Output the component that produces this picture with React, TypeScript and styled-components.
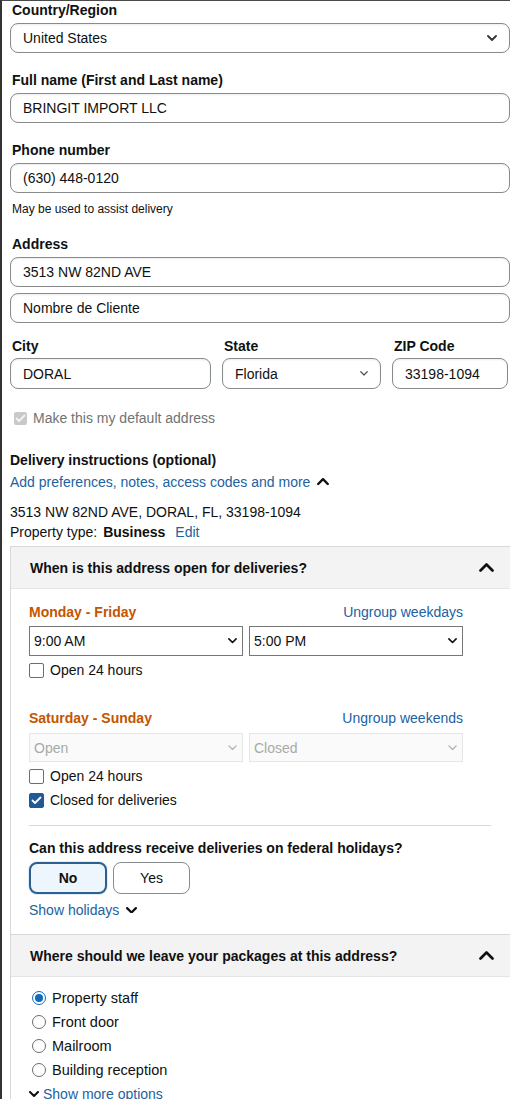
import React from 'react';
import styled, { createGlobalStyle } from 'styled-components';

const GlobalStyle = createGlobalStyle`
  html, body {
    margin: 0;
    padding: 0;
    background: #ffffff;
  }
  body {
    font-family: "Liberation Sans", Arial, sans-serif;
    font-size: 14px;
    color: #0f1111;
    border-top: 1px solid #4a4a4a;
    border-left: 2px solid #333333;
    overflow: hidden;
  }
  * { box-sizing: border-box; }
`;

const Page = styled.div`
  padding: 0 0 0 8px;
  width: 508px;
`;

const Label = styled.div<{ $mt?: number }>`
  font-weight: 700;
  font-size: 14px;
  line-height: 20px;
  height: 20px;
  margin-top: ${p => p.$mt ?? 0}px;
  padding-left: 2px;
  margin-bottom: 3px;
`;

const Field = styled.div<{ $mt?: number; $h?: number }>`
  height: ${p => p.$h ?? 30}px;
  border: 1px solid #888c8c;
  border-radius: 8px;
  padding: 0 12px;
  display: flex;
  align-items: center;
  justify-content: space-between;
  font-size: 14px;
  margin-top: ${p => p.$mt ?? 0}px;
  background: #ffffff;
  box-shadow: 0 1px 2px rgba(15, 17, 17, 0.08) inset;
`;

const Hint = styled.div`
  font-size: 12px;
  line-height: 16px;
  margin-top: 8px;
  padding-left: 2px;
`;

const Row3 = styled.div`
  display: grid;
  grid-template-columns: 201px 159px 116px;
  gap: 11px;
  margin-top: 13px;
`;

const Col = styled.div``;

const ColLabel = styled(Label)`
  margin-bottom: 2px;
`;

const DefaultRow = styled.label`
  display: flex;
  align-items: center;
  gap: 6px;
  height: 20px;
  margin-top: 19px;
  padding-left: 4px;
  color: #6f7373;
`;

const DisabledBox = styled.span`
  width: 13px;
  height: 13px;
  border-radius: 2px;
  background: #c9c9c9;
  display: flex;
  align-items: center;
  justify-content: center;
`;

const SectionTitle = styled.div`
  font-weight: 700;
  line-height: 20px;
  margin-top: 22px;
`;

const LinkRow = styled.div<{ $mt?: number }>`
  display: flex;
  align-items: center;
  gap: 7px;
  color: #2162a1;
  line-height: 20px;
  margin-top: ${p => p.$mt ?? 2}px;
`;

const Text = styled.div<{ $mt?: number }>`
  line-height: 20px;
  margin-top: ${p => p.$mt ?? 0}px;
`;

const Strong = styled.span`
  font-weight: 700;
  margin: 0 6px 0 6px;
`;

const Link = styled.span`
  color: #2162a1;
`;

const Panel = styled.div`
  margin-top: 4px;
  border: 1px solid #d5d9d9;
  border-right: none;
  margin-right: -2px;
`;

const PanelHeader = styled.div<{ $top?: boolean }>`
  height: ${p => (p.$top ? 42 : 43)}px;
  background: #f3f3f3;
  display: flex;
  align-items: center;
  justify-content: space-between;
  padding: 0 18px 0 19px;
  font-weight: 700;
  border-top: ${p => (p.$top ? 'none' : '1px solid #d5d9d9')};
  border-bottom: 1px solid #e3e6e6;
`;

const PanelBody = styled.div<{ $pt?: number; $pb?: number }>`
  padding: ${p => p.$pt ?? 12}px 18px ${p => p.$pb ?? 14}px 18px;
`;

const Schedule = styled.div`
  width: 434px;
`;

const DayHead = styled.div<{ $mt?: number }>`
  display: flex;
  justify-content: space-between;
  line-height: 20px;
  margin-top: ${p => p.$mt ?? 0}px;
`;

const DayName = styled.span`
  color: #c45500;
  font-weight: 700;
`;

const Selects = styled.div<{ $mt?: number }>`
  display: grid;
  grid-template-columns: 1fr 1fr;
  gap: 6px;
  margin-top: ${p => p.$mt ?? 4}px;
`;

const TimeSelect = styled.div<{ $disabled?: boolean }>`
  height: ${p => (p.$disabled ? 29 : 30)}px;
  border: 1px solid ${p => (p.$disabled ? '#e6e6e6' : '#767676')};
  background: ${p => (p.$disabled ? '#fafafa' : '#ffffff')};
  color: ${p => (p.$disabled ? '#a9a9a9' : '#0f1111')};
  display: flex;
  align-items: center;
  justify-content: space-between;
  padding: 0 5px 0 4px;
  font-size: 14px;
`;

const CheckRow = styled.label`
  display: flex;
  align-items: center;
  gap: 6px;
  height: 20px;
  margin-top: 4px;
`;

const Box = styled.span<{ $checked?: boolean }>`
  width: 15px;
  height: 15px;
  border-radius: 2px;
  border: 1px solid ${p => (p.$checked ? '#1f5a96' : '#6d6d6d')};
  background: ${p => (p.$checked ? '#1f5a96' : '#ffffff')};
  display: flex;
  align-items: center;
  justify-content: center;
`;

const Divider = styled.div`
  height: 1px;
  background: #d5d9d9;
  margin: 15px 0 0 0;
  width: 462px;
`;

const Question = styled.div`
  font-weight: 700;
  line-height: 20px;
  margin-top: 12px;
`;

const Buttons = styled.div`
  display: flex;
  gap: 6px;
  margin-top: 4px;
`;

const Toggle = styled.div<{ $active?: boolean }>`
  width: ${p => (p.$active ? 78 : 77)}px;
  height: 32px;
  border-radius: 8px;
  border: ${p => (p.$active ? '2px solid #2d5f8f' : '1px solid #888c8c')};
  background: ${p => (p.$active ? '#edf6fd' : '#ffffff')};
  display: flex;
  align-items: center;
  justify-content: center;
  font-weight: ${p => (p.$active ? 700 : 400)};
  box-shadow: ${p => (p.$active ? '0 0 0 1px #e0eefa' : 'none')};
`;

const Radios = styled.div`
  display: flex;
  flex-direction: column;
  gap: 4px;
  padding-left: 3px;
`;

const RadioRow = styled.label`
  display: flex;
  align-items: center;
  gap: 6px;
  height: 20px;
  font-size: 14.5px;
`;

const Radio = styled.span<{ $checked?: boolean }>`
  width: 14px;
  height: 14px;
  border-radius: 50%;
  border: 1px solid ${p => (p.$checked ? '#0f6cbd' : '#6d6d6d')};
  display: flex;
  align-items: center;
  justify-content: center;
  &::after {
    content: '';
    width: 8px;
    height: 8px;
    border-radius: 50%;
    background: ${p => (p.$checked ? '#0f6cbd' : 'transparent')};
  }
`;

const MoreRow = styled(LinkRow)`
  gap: 4px;
`;

const Chevron = ({ dir = 'down', size = 10, color = '#0f1111', w = 2 }: { dir?: 'up' | 'down'; size?: number; color?: string; w?: number }) => (
  <svg width={size} height={size * 0.6} viewBox="0 0 10 6" fill="none">
    <polyline
      points={dir === 'down' ? '1,1 5,5 9,1' : '1,5 5,1 9,5'}
      stroke={color}
      strokeWidth={w}
      strokeLinecap="round"
      strokeLinejoin="round"
    />
  </svg>
);

const Tick = ({ color = '#ffffff' }: { color?: string }) => (
  <svg width="11" height="9" viewBox="0 0 11 9" fill="none">
    <polyline points="1.5,4.5 4,7 9.5,1.5" stroke={color} strokeWidth="1.8" strokeLinecap="round" strokeLinejoin="round" />
  </svg>
);

export default function App() {
  return (
    <>
      <GlobalStyle />
      <Page>
        <Label $mt={-1}>Country/Region</Label>
        <Field>
          United States
          <Chevron size={10} w={1.8} color="#333" />
        </Field>

        <Label $mt={17}>Full name (First and Last name)</Label>
        <Field>BRINGIT IMPORT LLC</Field>

        <Label $mt={17}>Phone number</Label>
        <Field>(630) 448-0120</Field>
        <Hint>May be used to assist delivery</Hint>

        <Label $mt={17}>Address</Label>
        <Field>3513 NW 82ND AVE</Field>
        <Field $mt={6}>Nombre de Cliente</Field>

        <Row3>
          <Col>
            <ColLabel>City</ColLabel>
            <Field $h={31}>DORAL</Field>
          </Col>
          <Col>
            <ColLabel>State</ColLabel>
            <Field $h={31}>
              Florida
              <Chevron size={8} w={1.6} color="#555" />
            </Field>
          </Col>
          <Col>
            <ColLabel>ZIP Code</ColLabel>
            <Field $h={31}>33198-1094</Field>
          </Col>
        </Row3>

        <DefaultRow>
          <DisabledBox>
            <Tick color="#f4f4f4" />
          </DisabledBox>
          Make this my default address
        </DefaultRow>

        <SectionTitle>Delivery instructions (optional)</SectionTitle>
        <LinkRow>
          Add preferences, notes, access codes and more
          <Chevron dir="up" size={12} w={2} />
        </LinkRow>

        <Text $mt={10}>3513 NW 82ND AVE, DORAL, FL, 33198-1094</Text>
        <Text>
          Property type:<Strong>Business</Strong> <Link>Edit</Link>
        </Text>

        <Panel>
          <PanelHeader $top>
            When is this address open for deliveries?
            <Chevron dir="up" size={15} w={1.8} />
          </PanelHeader>
          <PanelBody $pt={13} $pb={14}>
            <Schedule>
              <DayHead>
                <DayName>Monday - Friday</DayName>
                <Link>Ungroup weekdays</Link>
              </DayHead>
              <Selects>
                <TimeSelect>
                  9:00 AM
                  <Chevron size={9} w={1.8} />
                </TimeSelect>
                <TimeSelect>
                  5:00 PM
                  <Chevron size={9} w={1.8} />
                </TimeSelect>
              </Selects>
              <CheckRow>
                <Box />
                Open 24 hours
              </CheckRow>

              <DayHead $mt={28}>
                <DayName>Saturday - Sunday</DayName>
                <Link>Ungroup weekends</Link>
              </DayHead>
              <Selects $mt={5}>
                <TimeSelect $disabled>
                  Open
                  <Chevron size={9} w={1.4} color="#b0b0b0" />
                </TimeSelect>
                <TimeSelect $disabled>
                  Closed
                  <Chevron size={9} w={1.4} color="#b0b0b0" />
                </TimeSelect>
              </Selects>
              <CheckRow>
                <Box />
                Open 24 hours
              </CheckRow>
              <CheckRow>
                <Box $checked>
                  <Tick />
                </Box>
                Closed for deliveries
              </CheckRow>
            </Schedule>

            <Divider />
            <Question>Can this address receive deliveries on federal holidays?</Question>
            <Buttons>
              <Toggle $active>No</Toggle>
              <Toggle>Yes</Toggle>
            </Buttons>
            <LinkRow $mt={6}>
              Show holidays
              <Chevron size={11} w={2} />
            </LinkRow>
          </PanelBody>

          <PanelHeader>
            Where should we leave your packages at this address?
            <Chevron dir="up" size={15} w={1.8} />
          </PanelHeader>
          <PanelBody $pt={11} $pb={20}>
            <Radios>
              <RadioRow>
                <Radio $checked />
                Property staff
              </RadioRow>
              <RadioRow>
                <Radio />
                Front door
              </RadioRow>
              <RadioRow>
                <Radio />
                Mailroom
              </RadioRow>
              <RadioRow>
                <Radio />
                Building reception
              </RadioRow>
            </Radios>
            <MoreRow $mt={4}>
              <Chevron size={10} w={2} />
              Show more options
            </MoreRow>
          </PanelBody>
        </Panel>
      </Page>
    </>
  );
}
